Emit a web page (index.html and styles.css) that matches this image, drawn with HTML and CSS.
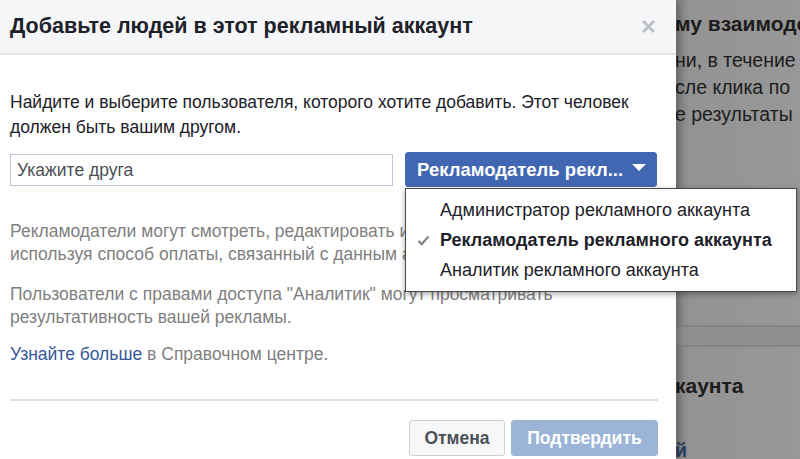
FILE: index.html
```html
<!DOCTYPE html>
<html lang="ru">
<head>
<meta charset="utf-8">
<title>Добавьте людей</title>
<link rel="stylesheet" href="styles.css">
</head>
<body>
<div class="screen">
  <div class="dialog">
    <div class="dialog-header">
      <h1 class="dialog-title">Добавьте людей в этот рекламный аккаунт</h1>
      <svg class="close" viewBox="0 0 15 15" width="15" height="15"><path d="M2 2 L13 13 M13 2 L2 13" stroke="#bcc0c6" stroke-width="3" fill="none"/></svg>
    </div>
    <div class="dialog-body">
      <p class="intro">Найдите и выберите пользователя, которого хотите добавить. Этот человек должен быть вашим другом.</p>
      <div class="picker-row">
        <div class="friend-input">Укажите друга</div>
        <div class="role-select">
          <button class="role-button"><span>Рекламодатель рекл...</span><span class="caret"></span></button>
          <ul class="role-menu">
            <li class="role-item">Администратор рекламного аккаунта</li>
            <li class="role-item selected"><svg class="check" viewBox="0 0 14 12" width="13" height="11"><path d="M1.5 6.5 L5 10 L12.5 1.5" fill="none" stroke="#7d7d7d" stroke-width="2.2"/></svg>Рекламодатель рекламного аккаунта</li>
            <li class="role-item">Аналитик рекламного аккаунта</li>
          </ul>
        </div>
      </div>
      <p class="note">Рекламодатели могут смотреть, редактировать и удалять рекламу,<br>используя способ оплаты, связанный с данным аккаунтом.</p>
      <p class="note">Пользователи с правами доступа "Аналитик" могут просматривать результативность вашей рекламы.</p>
      <p class="note"><a class="link" href="#">Узнайте больше</a> в Справочном центре.</p>
    </div>
    <div class="dialog-footer">
      <button class="btn btn-cancel">Отмена</button>
      <button class="btn btn-confirm">Подтвердить</button>
    </div>
  </div>
  <div class="backdrop">
    <div class="bg-top">
      <div class="bg-line bg-bold">му взаимодействию</div>
      <div class="bg-line bg-first">ни, в течение</div>
      <div class="bg-line">сле клика по</div>
      <div class="bg-line">е результаты</div>
    </div>
    <div class="bg-rule"></div>
    <div class="bg-bottom">
      <div class="bg-line bg-bold bg-head">каунта</div>
      <div class="bg-line bg-link">й</div>
    </div>
  </div>
</div>
</body>
</html>
```
FILE: styles.css
```css
* { box-sizing: border-box; }
html, body {
  margin: 0;
  padding: 0;
  width: 800px;
  height: 459px;
  overflow: hidden;
  font-family: "Liberation Sans", Arial, sans-serif;
}
.screen {
  display: flex;
  width: 800px;
  height: 459px;
  background: #959595;
}
.dialog {
  width: 676px;
  flex: 0 0 676px;
  background: #fff;
  position: relative;
  z-index: 2;
  box-shadow: 3px 0 8px rgba(0,0,0,0.25);
  display: flex;
  flex-direction: column;
}
.dialog-header {
  height: 55px;
  background: #f5f6f7;
  border-bottom: 2px solid #e5e6e9;
  display: flex;
  align-items: center;
  justify-content: space-between;
  padding: 0 20px 0 10px;
}
.dialog-title {
  margin: 0;
  font-size: 21.5px;
  font-weight: bold;
  color: #1d2129;
}
.close {
  display: block;
}
.dialog-body {
  padding: 35px 19px 0 10px;
}
.intro {
  margin: 0;
  font-size: 17.5px;
  line-height: 25px;
  color: #1d2129;
}
.picker-row {
  display: flex;
  align-items: center;
  gap: 12px;
  margin-top: 12px;
}
.friend-input {
  width: 384px;
  height: 32px;
  border: 1px solid #bdc7d8;
  padding: 0 6px;
  font-size: 17.5px;
  line-height: 30px;
  color: #4b4f56;
}
.role-select {
  position: relative;
  width: 252px;
}
.role-button {
  width: 252px;
  height: 35px;
  background: #4267b2;
  border: 1px solid #4267b2;
  border-radius: 3px;
  color: #fff;
  font-family: "Liberation Sans", Arial, sans-serif;
  font-size: 18.5px;
  font-weight: bold;
  display: flex;
  align-items: center;
  justify-content: space-between;
  padding: 0 10px 0 11px;
  white-space: nowrap;
}
.caret {
  width: 0;
  height: 0;
  border-left: 7px solid transparent;
  border-right: 7px solid transparent;
  border-top: 7px solid #fff;
  margin-top: -4px;
}
.role-menu {
  position: absolute;
  left: 0;
  top: 36px;
  width: 392px;
  margin: 0;
  padding: 6px 0;
  list-style: none;
  background: #fff;
  border: 1px solid #4a4a4a;
  box-shadow: 0 2px 6px rgba(0,0,0,0.35);
  z-index: 5;
}
.role-item {
  position: relative;
  height: 30px;
  line-height: 30px;
  padding-left: 34px;
  font-size: 18px;
  color: #1d2129;
  white-space: nowrap;
}
.role-item.selected { font-weight: bold; }
.check {
  position: absolute;
  left: 11px;
  top: 10px;
}
.note {
  margin: 33px 0 0;
  font-size: 17.5px;
  line-height: 23px;
  color: #7f7f7f;
}
.note + .note { margin-top: 17px; }
.note:last-child { margin-top: 14px; }
.link {
  color: #365899;
  text-decoration: none;
}
.dialog-footer {
  margin: 33px 18px 0 10px;
  border-top: 2px solid #e1e2e4;
  padding-top: 19px;
  display: flex;
  justify-content: flex-end;
  gap: 6px;
}
.btn {
  height: 36px;
  border-radius: 3px;
  font-family: "Liberation Sans", Arial, sans-serif;
  font-size: 17.5px;
  font-weight: bold;
  padding: 0;
  text-align: center;
}
.btn-cancel {
  width: 96px;
  background: #f6f7f9;
  border: 1px solid #ced0d4;
  color: #4b4f56;
}
.btn-confirm {
  width: 147px;
  background: #9cb4d8;
  border: 1px solid #9cb4d8;
  color: #fff;
}
.backdrop {
  flex: 1;
  overflow: hidden;
  color: #1c1c1c;
  background: linear-gradient(to right, #858585 0, #939393 14px, #989898 100%);
}
.bg-top {
  padding-top: 10px;
}
.bg-line {
  font-size: 19.5px;
  line-height: 27px;
  white-space: nowrap;
  margin-left: -1px;
}
.bg-bold { font-weight: bold; font-size: 21px; }
.bg-first { margin-top: 10px; }
.bg-rule {
  margin-top: 197px;
  height: 22px;
  border-top: 2px solid #838383;
  border-bottom: 2px solid #838383;
  background: #909090;
}
.bg-head { margin-top: 25px; }
.bg-link { margin-top: 38px; color: #2c3f66; font-weight: bold; }
```
